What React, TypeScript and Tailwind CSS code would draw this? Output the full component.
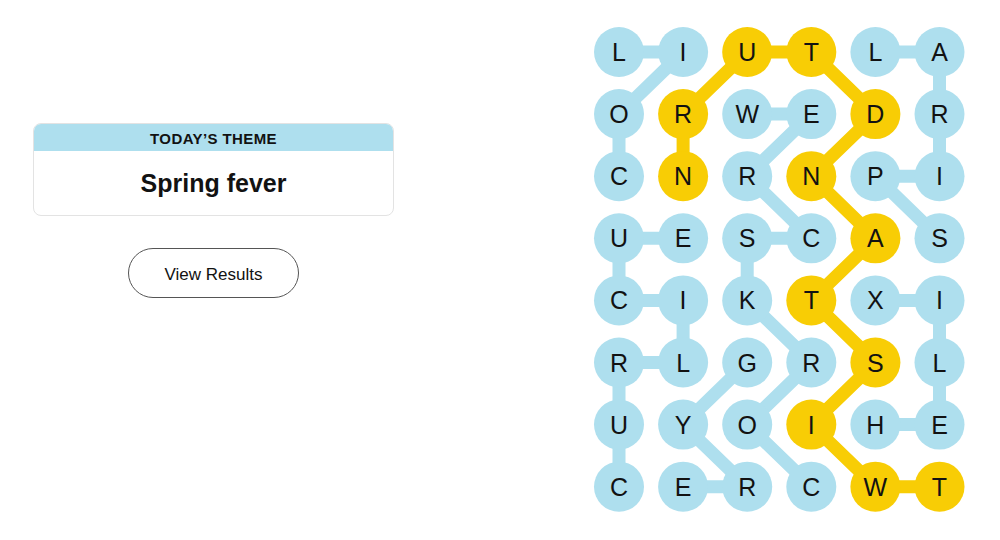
import React from "react";

const letters = [
  "LIUTLA",
  "ORWEDR",
  "CNRNPI",
  "UESCAS",
  "CIKTXI",
  "RLGRSL",
  "UYOIHE",
  "CERCWT",
];

type Cell = [number, number];

// found words as [row, col] paths
const blueWords: Cell[][] = [
  // COIL
  [[2, 0], [1, 0], [0, 1], [0, 0]],
  // SPIRAL
  [[3, 5], [2, 4], [2, 5], [1, 5], [0, 5], [0, 4]],
  // CURLICUE
  [[7, 0], [6, 0], [5, 0], [5, 1], [4, 1], [4, 0], [3, 0], [3, 1]],
  // HELIX
  [[6, 4], [6, 5], [5, 5], [4, 5], [4, 4]],
  // CORKSCREW
  [[7, 3], [6, 2], [5, 3], [4, 2], [3, 2], [3, 3], [2, 2], [1, 3], [1, 2]],
  // GYRE
  [[5, 2], [6, 1], [7, 2], [7, 1]],
];

const spangram: Cell[] = [
  [2, 1], [1, 1], [0, 2], [0, 3], [1, 4], [2, 3],
  [3, 4], [4, 3], [5, 4], [6, 3], [7, 4], [7, 5],
];

const BLUE = "#aedfee";
const YELLOW = "#f8cd05";

const cx = (c: number) => 39 + c * 64.1;
const cy = (r: number) => 52 + r * 62.1;

const Board: React.FC = () => {
  const yellowSet = new Set(spangram.map(([r, c]) => `${r}-${c}`));

  const pathD = (cells: Cell[]) =>
    cells.map(([r, c], i) => `${i === 0 ? "M" : "L"}${cx(c)} ${cy(r)}`).join(" ");

  return (
    <svg width="400" height="540" viewBox="0 0 400 540">
      {blueWords.map((w, i) => (
        <path
          key={i}
          d={pathD(w)}
          fill="none"
          stroke={BLUE}
          strokeWidth={13}
          strokeLinejoin="round"
        />
      ))}
      <path
        d={pathD(spangram)}
        fill="none"
        stroke={YELLOW}
        strokeWidth={13}
        strokeLinejoin="round"
      />
      {letters.map((row, r) =>
        row.split("").map((ch, c) => {
          const yellow = yellowSet.has(`${r}-${c}`);
          return (
            <g key={`${r}-${c}`}>
              <circle cx={cx(c)} cy={cy(r)} r={25} fill={yellow ? YELLOW : BLUE} />
              <text
                x={cx(c)}
                y={cy(r) + 9}
                textAnchor="middle"
                fontFamily="'Liberation Sans', Arial, sans-serif"
                fontSize={25}
                fill="#121212"
              >
                {ch}
              </text>
            </g>
          );
        })
      )}
    </svg>
  );
};

export default function App() {
  return (
    <div className="flex w-[1000px] h-[540px] bg-white overflow-hidden font-['Liberation_Sans',Arial,sans-serif] text-[#121212]">
      <div className="w-[580px] pl-[33px] pt-[123px]">
        <div className="w-[361px]">
          <div className="rounded-lg border border-[#e3e3e3] overflow-hidden">
            <div className="h-[27px] bg-[#aedfee] flex items-center justify-center pt-[1px] text-[15px] font-bold leading-none tracking-[0.4px]">
              TODAY’S THEME
            </div>
            <div className="h-[64px] flex items-center justify-center text-[25px] font-bold leading-none">
              Spring fever
            </div>
          </div>
          <div className="flex justify-center mt-[32px]">
            <button className="w-[171px] h-[50px] rounded-full border border-[#555] pt-[4px] text-[17px] bg-white">
              View Results
            </button>
          </div>
        </div>
      </div>
      <Board />
    </div>
  );
}
